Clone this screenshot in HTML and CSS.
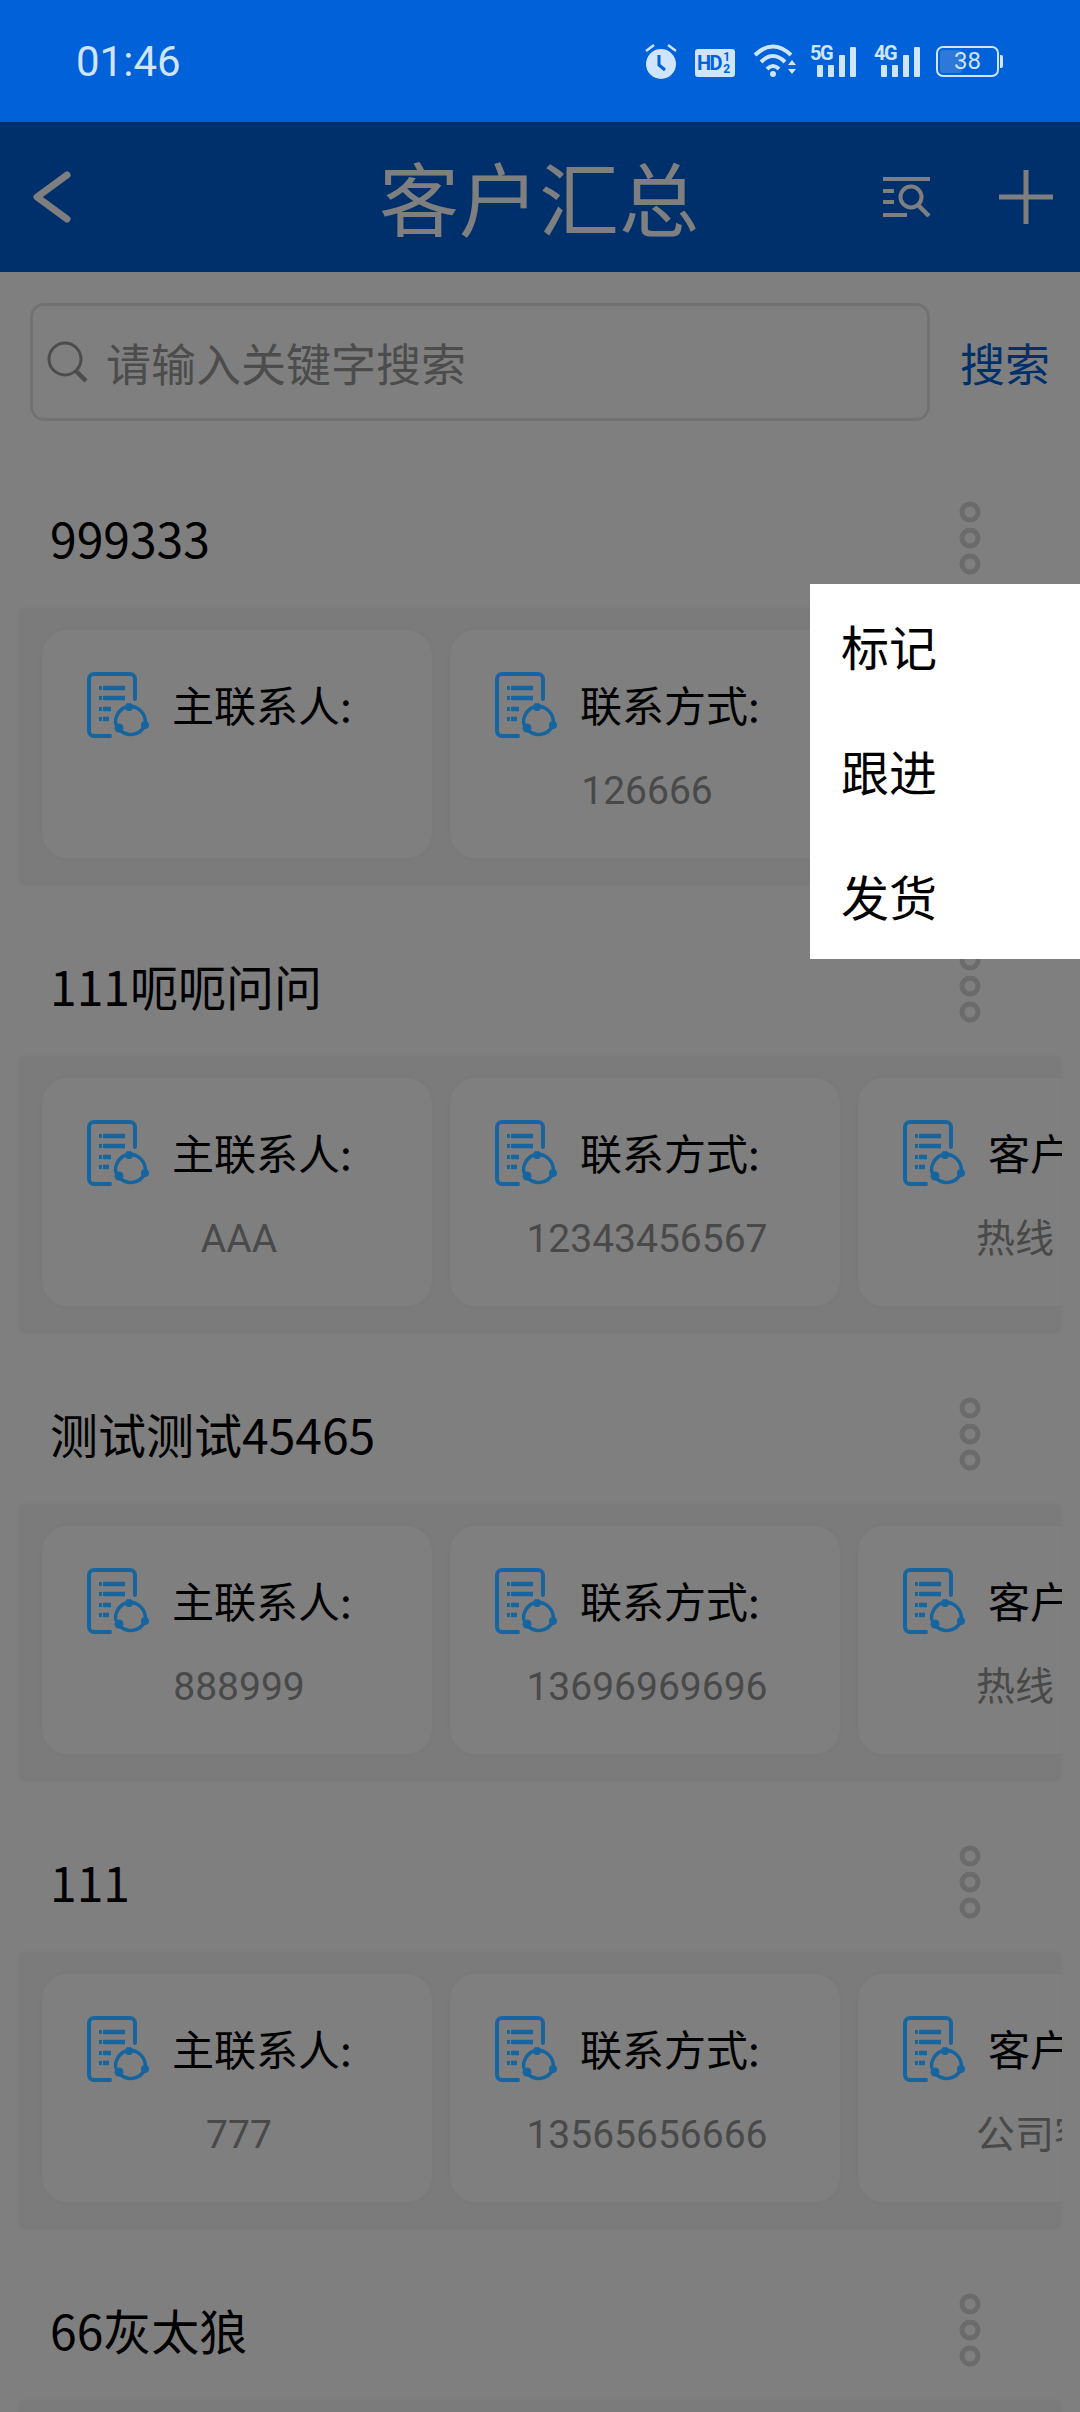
FILE: index.html
```html
<!DOCTYPE html>
<html lang="zh">
<head>
<meta charset="utf-8">
<title>客户汇总</title>
<link rel="stylesheet" href="styles.css">
</head>
<body>
<svg class="defs" width="0" height="0" aria-hidden="true">
  <symbol id="doc" viewBox="0 0 62 66">
    <path d="M23 64H7a5 5 0 0 1-5-5V7a5 5 0 0 1 5-5h36a5 5 0 0 1 5 5v20" fill="none" stroke="#17659f" stroke-width="4" stroke-linecap="round"/>
    <path d="M16 16h22M16 26h22M16 37h8M16 47h6" fill="none" stroke="#17659f" stroke-width="4.500"/>
    <path d="M12 14h3v4h-3zM12 24h3v4h-3zM12 35h3v4h-3zM12 45h3v4h-3z" fill="#17659f"/>
    <path d="M29 53A15.500 15.500 0 0 1 41 34.500M41 34.500A15.500 15.500 0 0 1 58 53M58 53A15.500 15.500 0 0 1 32 57" fill="none" stroke="#17659f" stroke-width="3.500"/>
    <circle cx="42" cy="35" r="4" fill="#17659f"/><circle cx="58" cy="53" r="4" fill="#17659f"/><circle cx="32" cy="56" r="4.500" fill="#17659f"/>
  </symbol>
  <symbol id="kebab" viewBox="0 0 24 76">
    <circle cx="12" cy="12" r="8" fill="none" stroke="#d6d6d6" stroke-width="5"/>
    <circle cx="12" cy="38" r="8" fill="none" stroke="#d6d6d6" stroke-width="5"/>
    <circle cx="12" cy="64" r="8" fill="none" stroke="#d6d6d6" stroke-width="5"/>
  </symbol>
</svg>

<div class="status">
  <span class="time">01:46</span>
  <div class="status-icons">
    <svg class="si-alarm" viewBox="0 0 32 36"><path d="M1 8l8-6M31 8l-8-6" stroke="#cfe4ff" stroke-width="2.500" fill="none"/><circle cx="16" cy="21" r="15" fill="#cfe4ff"/><path d="M14 12v10l6 5" stroke="#0061d8" stroke-width="3" fill="none"/></svg>
    <span class="si-hd">HD<span class="si-hd-frac">1<br>2</span></span>
    <svg class="si-wifi" viewBox="0 0 44 34"><path d="M2 11Q20-6 38 11M8 18Q20 6 32 18M14 25Q20 19 26 25" stroke="#cfe4ff" stroke-width="4" fill="none"/><circle cx="20" cy="30" r="3" fill="#cfe4ff"/><path d="M35 21l4-5 4 5zM35 25l4 5 4-5z" fill="#cfe4ff"/></svg>
    <div class="si-net"><span class="si-net-label">5G</span><i class="b1"></i><i class="b2"></i><i class="b3"></i><i class="b4"></i></div>
    <div class="si-net si-net-last"><span class="si-net-label">4G</span><i class="b1"></i><i class="b2"></i><i class="b3"></i><i class="b4"></i></div>
    <div class="si-batt"><div class="si-batt-body"><span class="si-batt-fill"></span><span class="si-batt-num">38</span></div><span class="si-batt-cap"></span></div>
  </div>
</div>

<div class="screen">
  <header class="bar">
    <svg class="back" viewBox="0 0 40 52"><path d="M35 4L5 26l30 22" fill="none" stroke="#fff" stroke-width="7" stroke-linecap="round" stroke-linejoin="round"/></svg>
    <h1 class="title">客户汇总</h1>
    <svg class="filter" viewBox="0 0 49 40"><path d="M1 2h47M1 14h11M1 25h11M1 38h24" stroke="#fff" stroke-width="4" fill="none"/><circle cx="29" cy="20" r="10.500" stroke="#fff" stroke-width="4" fill="none"/><path d="M36 28l11 11" stroke="#fff" stroke-width="4.500" fill="none"/></svg>
    <svg class="plus" viewBox="0 0 54 54"><path d="M27 0v54M0 27h54" stroke="#fff" stroke-width="5" fill="none"/></svg>
  </header>

  <div class="search-row">
    <div class="search-box">
      <svg class="search-ico" viewBox="0 0 42 42"><circle cx="18" cy="18" r="16" fill="none" stroke="#999" stroke-width="3"/><path d="M29 30l10 10" stroke="#999" stroke-width="4.500"/></svg>
      <span class="placeholder">请输入关键字搜索</span>
    </div>
    <span class="search-btn">搜索</span>
  </div>

  <section class="item">
    <div class="item-head"><span class="name">999333</span><svg class="more"><use href="#kebab"/></svg></div>
    <div class="strip">
      <div class="card"><div class="card-top"><svg class="doc"><use href="#doc"/></svg><span class="label">主联系人:</span></div><div class="value"></div></div>
      <div class="card"><div class="card-top"><svg class="doc"><use href="#doc"/></svg><span class="label">联系方式:</span></div><div class="value">126666</div></div>
      <div class="card card-last"><div class="card-top"><svg class="doc"><use href="#doc"/></svg><span class="label">客户类型:</span></div><div class="value">热线</div></div>
    </div>
  </section>

  <section class="item">
    <div class="item-head"><span class="name">111呃呃问问</span><svg class="more"><use href="#kebab"/></svg></div>
    <div class="strip">
      <div class="card"><div class="card-top"><svg class="doc"><use href="#doc"/></svg><span class="label">主联系人:</span></div><div class="value">AAA</div></div>
      <div class="card"><div class="card-top"><svg class="doc"><use href="#doc"/></svg><span class="label">联系方式:</span></div><div class="value">12343456567</div></div>
      <div class="card card-last"><div class="card-top"><svg class="doc"><use href="#doc"/></svg><span class="label">客户类型:</span></div><div class="value">热线</div></div>
    </div>
  </section>

  <section class="item">
    <div class="item-head"><span class="name">测试测试45465</span><svg class="more"><use href="#kebab"/></svg></div>
    <div class="strip">
      <div class="card"><div class="card-top"><svg class="doc"><use href="#doc"/></svg><span class="label">主联系人:</span></div><div class="value">888999</div></div>
      <div class="card"><div class="card-top"><svg class="doc"><use href="#doc"/></svg><span class="label">联系方式:</span></div><div class="value">13696969696</div></div>
      <div class="card card-last"><div class="card-top"><svg class="doc"><use href="#doc"/></svg><span class="label">客户类型:</span></div><div class="value">热线</div></div>
    </div>
  </section>

  <section class="item">
    <div class="item-head"><span class="name">111</span><svg class="more"><use href="#kebab"/></svg></div>
    <div class="strip">
      <div class="card"><div class="card-top"><svg class="doc"><use href="#doc"/></svg><span class="label">主联系人:</span></div><div class="value">777</div></div>
      <div class="card"><div class="card-top"><svg class="doc"><use href="#doc"/></svg><span class="label">联系方式:</span></div><div class="value">13565656666</div></div>
      <div class="card card-last"><div class="card-top"><svg class="doc"><use href="#doc"/></svg><span class="label">客户类型:</span></div><div class="value">公司客户</div></div>
    </div>
  </section>

  <section class="item">
    <div class="item-head"><span class="name">66灰太狼</span><svg class="more"><use href="#kebab"/></svg></div>
    <div class="strip"></div>
  </section>

  <div class="scrim"></div>
  <nav class="menu">
    <div class="menu-item">标记</div>
    <div class="menu-item">跟进</div>
    <div class="menu-item">发货</div>
  </nav>
</div>
</body>
</html>
```
FILE: styles.css
```css
* { box-sizing: border-box; }
html, body { margin: 0; padding: 0; }
body {
  width: 1080px;
  height: 2412px;
  overflow: hidden;
  background: #fff;
  font-family: "Noto Sans CJK SC", "Noto Sans", sans-serif;
}
.defs { position: absolute; }

.status {
  height: 122px;
  background: #0061d8;
  color: #cfe4ff;
  display: flex;
  align-items: center;
  justify-content: space-between;
  padding: 0 77px 0 76px;
}
.time { font: 400 42px/1 Roboto, sans-serif; margin-top: 2px; }
.status-icons { display: flex; align-items: center; height: 34px; }
.si-alarm { width: 32px; height: 36px; margin-right: 18px; }
.si-hd {
  width: 40px; height: 28px; background: #cfe4ff; color: #0061d8; border-radius: 3px;
  font: 700 20px/28px Roboto, sans-serif; letter-spacing: -1.5px;
  padding-left: 2px; display: flex; margin-top: 4px; margin-right: 18px; overflow: hidden;
}
.si-hd-frac { font-size: 12px; line-height: 12px; letter-spacing: 0; padding: 2px 0 0 2px; }
.si-wifi { width: 44px; height: 34px; margin-right: 13px; }
.si-net {
  position: relative; width: 46px; height: 32px; margin-right: 18px;
  display: flex; align-items: flex-end; justify-content: flex-end; gap: 5px;
}
.si-net-last { margin-right: 16px; }
.si-net-label { position: absolute; left: 0; top: -1px; font: 700 20px/18px Roboto, sans-serif; color: #cfe4ff; letter-spacing: -1.5px; }
.si-net i { display: block; width: 6px; background: #cfe4ff; border-radius: 1px; }
.si-net .b1 { height: 12px; }
.si-net .b2 { height: 12px; }
.si-net .b3 { height: 22px; }
.si-net .b4 { height: 30px; }
.si-batt { display: flex; align-items: center; }
.si-batt-body {
  position: relative; width: 63px; height: 31px; border: 2px solid #cfe4ff; border-radius: 7px;
  display: flex; align-items: center; justify-content: center;
}
.si-batt-fill { position: absolute; left: 2px; top: 2px; bottom: 2px; width: 22px; background: #2e78da; border-radius: 3px; }
.si-batt-num { position: relative; font: 400 24px/1 Roboto, sans-serif; color: #cfe4ff; }
.si-batt-cap { width: 3px; height: 13px; background: #cfe4ff; border-radius: 0 2px 2px 0; margin-left: 1px; }

.screen { position: relative; height: 2290px; overflow: hidden; background: #fff; }
.bar {
  height: 150px; background: #0061d8; position: relative;
  display: flex; align-items: center; padding: 0 27px 0 32px;
}
.back { width: 40px; height: 52px; }
.title { position: absolute; left: 379px; top: 0; margin: 0; color: #fff; font-weight: 400; font-size: 80px; line-height: 146px; }
.filter { width: 49px; height: 40px; margin-left: auto; margin-right: 68px; }
.plus { width: 54px; height: 54px; }

.search-row { display: flex; align-items: center; padding: 31px 30px 0; }
.search-box {
  width: 900px; height: 118px; border: 3px solid #e4e4e4; border-radius: 14px;
  display: flex; align-items: center; padding-left: 14px;
}
.search-ico { width: 42px; height: 42px; margin-right: 17px; }
.placeholder { font-size: 45px; color: #989898; }
.search-btn { margin-left: 30px; font-size: 45px; color: #0061d8; line-height: 1; }

.item { height: 448px; }
.item:first-of-type { margin-top: 27px; }
.item-head { height: 160px; padding: 18px 98px 0 50px; display: flex; align-items: center; justify-content: space-between; }
.name { font-size: 48px; color: #000; line-height: 1; }
.more { width: 24px; height: 76px; margin-top: 2px; }
.strip {
  margin: 0 18px; height: 277px; background: #f7f7f7; display: flex; gap: 18px;
  padding: 22px 0 27px 24px; overflow: hidden; border-radius: 6px;
  box-shadow: 0 0 8px #f9f9f9;
}
.card {
  flex: 0 0 390px; background: #fff; border-radius: 26px; padding-top: 40px; text-align: center;
  box-shadow: 0 0 10px rgba(0, 0, 0, .04);
}
.card-top { display: flex; align-items: center; padding-left: 45px; height: 70px; text-align: left; }
.doc { width: 62px; height: 66px; flex: none; position: relative; z-index: 2; }
.label { margin-left: 23px; font-size: 42px; color: #000; white-space: nowrap; line-height: 1; margin-top: -3px; }
.value { margin-top: 26px; padding-left: 4px; font: 400 39px/50px Roboto, "Noto Sans CJK SC", sans-serif; color: #929292; }
.card-last .value { text-align: left; padding-left: 118px; white-space: nowrap; }

.scrim { position: absolute; inset: 0; background: rgba(0, 0, 0, .5); z-index: 1; }
.menu { position: absolute; left: 810px; top: 462px; width: 270px; background: #fff; z-index: 3; }
.menu-item { height: 125px; padding: 0 0 3px 31px; font-size: 48px; color: #000; display: flex; align-items: center; }
```
